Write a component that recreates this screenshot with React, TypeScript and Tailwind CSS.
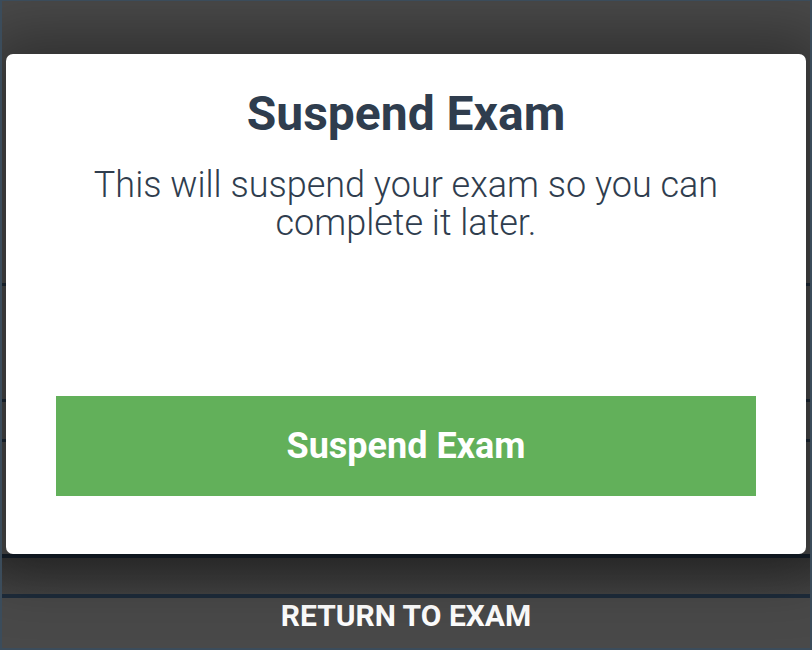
import React from "react";

const font = { fontFamily: "Roboto, 'Noto Sans', sans-serif" };

function Rule({ className }: { className: string }) {
  return <div className={`shrink-0 ${className}`} />;
}

export default function App() {
  return (
    <div
      className="relative w-[812px] h-[650px] overflow-hidden border-x-2 border-t border-b-2 border-[#3b4c5b] bg-[#494949]"
      style={font}
    >
      {/* page beneath the dialog */}
      <div className="flex h-full flex-col">
        <div className="h-[282px] shrink-0" />
        <Rule className="h-[3px] bg-[#1c2835]" />
        <div className="h-[113px] shrink-0" />
        <Rule className="h-[3px] bg-[#1c2835]" />
        <div className="h-[37px] shrink-0" />
        <Rule className="h-[3px] bg-[#1c2835]" />
        <div className="h-[112px] shrink-0" />
        <Rule className="h-[4px] bg-[#141e29]" />
        <div className="h-[36px] shrink-0 bg-gradient-to-b from-[#363636] to-[#424242]" />
        <Rule className="h-[4px] bg-[#1e2c3b]" />
        <div className="flex flex-1 items-center justify-center pb-[14px]">
          <span className="text-[30px] font-bold leading-[34px] text-white">RETURN TO EXAM</span>
        </div>
      </div>

      {/* dialog */}
      <div className="absolute left-[4px] top-[53px] flex h-[500px] w-[800px] flex-col items-center rounded-[7px] bg-white shadow-[0_0_60px_20px_rgba(0,0,0,0.35)]">
        <h1 className="mt-[32px] text-[48px] font-bold leading-[56px] text-[#2f3d4e]">Suspend Exam</h1>
        <p className="mt-[24px] w-[700px] text-center text-[36px] font-light leading-[38px] text-[#2f3d4e]">
          This will suspend your exam so you can complete it later.
        </p>
        <button className="mt-auto mb-[58px] flex h-[100px] w-[700px] items-center justify-center bg-[#62b05a] text-[36px] font-bold text-white">
          Suspend Exam
        </button>
      </div>
    </div>
  );
}
